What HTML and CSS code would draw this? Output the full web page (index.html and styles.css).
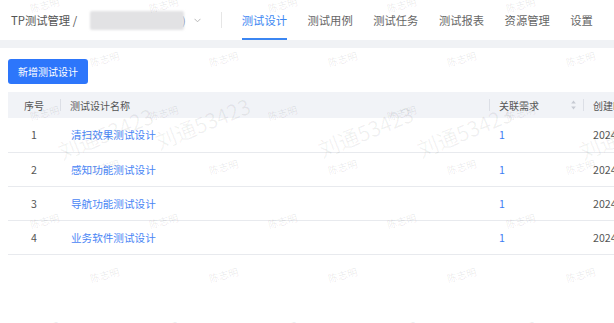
FILE: index.html
```html
<!DOCTYPE html>
<html lang="zh">
<head>
<meta charset="utf-8">
<title>测试设计</title>
<link rel="stylesheet" href="styles.css">
</head>
<body>
<header class="topbar">
  <span class="crumb">TP测试管理 /</span>
  <div class="project">
    <span class="blurbox"></span>
    <span class="paren">)</span>
    <svg class="chev" width="7" height="5" viewBox="0 0 7 5"><path d="M0.5 0.8 L3.5 3.8 L6.5 0.8" fill="none" stroke="#b8b8b8" stroke-width="1"/></svg>
  </div>
  <span class="vdivider"></span>
  <nav class="tabs">
    <a class="tab active">测试设计</a>
    <a class="tab">测试用例</a>
    <a class="tab">测试任务</a>
    <a class="tab">测试报表</a>
    <a class="tab">资源管理</a>
    <a class="tab">设置</a>
  </nav>
</header>
<main class="content">
  <button class="btn-primary">新增测试设计</button>
  <table class="grid">
    <colgroup>
      <col class="c-idx"><col class="c-name"><col class="c-req"><col class="c-date">
    </colgroup>
    <thead>
      <tr>
        <th class="center">序号</th>
        <th class="sep">测试设计名称</th>
        <th class="sep"><span class="th-flex">关联需求<svg class="sort" width="5" height="10" viewBox="0 0 5 10"><path d="M2.5 0.5 L4.8 3.6 L0.2 3.6 Z" fill="#c6cad2"/><path d="M2.5 9.5 L4.8 6.4 L0.2 6.4 Z" fill="#c6cad2"/></svg></span></th>
        <th class="sep">创建时间</th>
      </tr>
    </thead>
    <tbody>
      <tr><td class="center">1</td><td><a class="link">清扫效果测试设计</a></td><td><a class="num">1</a></td><td>2024-01-01</td></tr>
      <tr><td class="center">2</td><td><a class="link">感知功能测试设计</a></td><td><a class="num">1</a></td><td>2024-01-01</td></tr>
      <tr><td class="center">3</td><td><a class="link">导航功能测试设计</a></td><td><a class="num">1</a></td><td>2024-01-01</td></tr>
      <tr><td class="center">4</td><td><a class="link">业务软件测试设计</a></td><td><a class="num">1</a></td><td>2024-01-01</td></tr>
    </tbody>
  </table>
</main>
<div class="watermark" aria-hidden="true">
  <div class="wm-grid">
    <div class="wm-row odd"><span>陈志明</span><span>陈志明</span><span>陈志明</span><span>陈志明</span><span>陈志明</span></div>
    <div class="wm-row even"><span>陈志明</span><span>陈志明</span><span>陈志明</span><span>陈志明</span><span>陈志明</span></div>
    <div class="wm-row odd"><span>陈志明</span><span>陈志明</span><span>陈志明</span><span>陈志明</span><span>陈志明</span></div>
    <div class="wm-row even"><span>陈志明</span><span>陈志明</span><span>陈志明</span><span>陈志明</span><span>陈志明</span></div>
    <div class="wm-row odd"><span>陈志明</span><span>陈志明</span><span>陈志明</span><span>陈志明</span><span>陈志明</span></div>
    <div class="wm-row even"><span>陈志明</span><span>陈志明</span><span>陈志明</span><span>陈志明</span><span>陈志明</span></div>
    <div class="wm-row odd"><span>陈志明</span><span>陈志明</span><span>陈志明</span><span>陈志明</span><span>陈志明</span></div>
  </div>
  <span class="wm-big b1">刘通53423</span>
  <span class="wm-big b2">刘通53423</span>
  <span class="wm-big b3">刘通53423</span>
  <span class="wm-big b4">刘通53423</span>
  <span class="wm-big b5">刘通53423</span>
</div>
</body>
</html>
```
FILE: styles.css
```css
* { box-sizing: border-box; }
html, body { margin: 0; padding: 0; }
body {
  background: #f0f2f5;
  font-family: "Noto Sans CJK SC", "Noto Sans", sans-serif;
  color: #333;
  position: relative;
  min-height: 100vh;
  overflow: hidden;
}
.topbar {
  height: 40px;
  background: #fff;
  display: flex;
  align-items: center;
  padding-left: 11px;
  font-size: 11.3px;
}
.crumb { color: #555; white-space: nowrap; }
.project { display: flex; align-items: center; margin-left: 13px; }
.blurbox {
  display: block;
  width: 94px;
  height: 19px;
  background: #e2e2e4;
  border-radius: 2px;
  filter: blur(1.3px);
}
.paren { color: #6b6f90; font-size: 11px; margin-left: -2px; }
.chev { margin-left: 8px; display: block; }
.vdivider { width: 1px; height: 16px; background: #e6e6e6; margin-left: 20px; }
.tabs { display: flex; gap: 20.5px; margin-left: 20px; height: 40px; }
.tab {
  height: 40px;
  display: flex;
  align-items: center;
  color: #666;
  border-bottom: 2px solid transparent;
  padding-top: 2px;
  white-space: nowrap;
}
.tab.active { color: #3b86f2; border-bottom-color: #3b86f2; }
.content {
  margin-top: 8px;
  background: #fff;
  padding: 11px 0 0 8px;
  min-height: calc(100vh - 48px);
  overflow: hidden;
}
.btn-primary {
  display: block;
  height: 25px;
  width: 80px;
  padding: 0;
  border: none;
  border-radius: 3px;
  background: #2d76fb;
  color: #fff;
  font-family: inherit;
  font-size: 10px;
}
.grid {
  margin-top: 8px;
  width: 720px;
  table-layout: fixed;
  border-collapse: collapse;
}
.c-idx { width: 52px; }
.c-name { width: 429px; }
.c-req { width: 94px; }
.c-date { width: 145px; }
.grid th {
  height: 26px;
  background: #f1f3f7;
  font-weight: normal;
  font-size: 10px;
  color: #555;
  text-align: left;
  padding: 0 0 0 10px;
  position: relative;
  white-space: nowrap;
}
.grid th.center, .grid td.center { text-align: center; padding-left: 0; }
.grid th.sep::before {
  content: "";
  position: absolute;
  left: 0;
  top: 7px;
  width: 1px;
  height: 12px;
  background: #dcdfe6;
}
.th-flex { display: flex; align-items: center; justify-content: space-between; padding-right: 7px; }
.sort { display: block; }
.grid td {
  height: 34px;
  border-bottom: 1px solid #e8eaee;
  font-size: 10.6px;
  color: #555;
  padding: 0 0 0 10px;
  white-space: nowrap;
}
.grid td:first-child { padding-left: 0; }
.grid td:nth-child(2) { padding-left: 11px; }
.link { color: #4a86f5; }
.num { color: #3c7cf4; }

/* watermark overlay */
.watermark {
  position: absolute;
  inset: 0;
  pointer-events: none;
  overflow: hidden;
  z-index: 10;
}
.wm-grid { margin-top: -19px; }
.wm-row { display: flex; height: 54px; align-items: center; }
.wm-row.odd { padding-left: 30px; }
.wm-row.even { padding-left: 90px; }
.wm-row span {
  flex: none;
  width: 119px;
  font-size: 10px;
  color: rgba(0, 0, 0, 0.09);
  transform: rotate(-15deg);
  transform-origin: 0 50%;
}
.wm-big {
  position: absolute;
  font-size: 21px;
  line-height: 21px;
  color: rgba(0, 0, 0, 0.06);
  transform: rotate(-22deg);
  transform-origin: 0 100%;
  white-space: nowrap;
}
.b1 { left: 63px; top: 141px; }
.b2 { left: 160px; top: 131px; }
.b3 { left: 323px; top: 139px; }
.b4 { left: 422px; top: 139px; }
.b5 { left: 584px; top: 141px; }
```
